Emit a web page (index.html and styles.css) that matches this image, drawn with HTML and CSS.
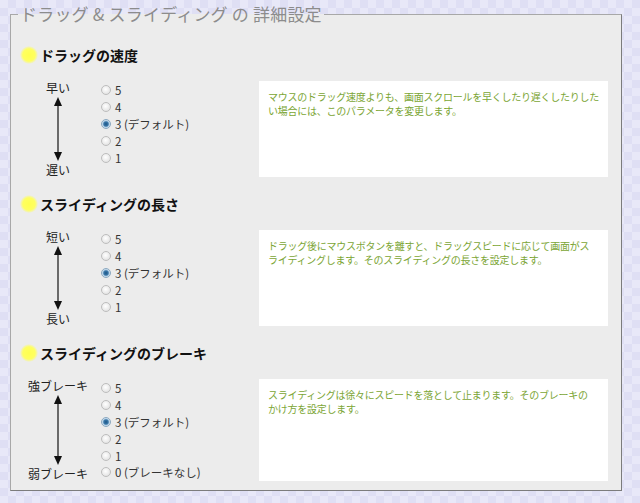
FILE: index.html
```html
<!DOCTYPE html>
<html lang="ja">
<head>
<meta charset="utf-8">
<title>ドラッグ & スライディング の 詳細設定</title>
<link rel="stylesheet" href="styles.css">
</head>
<body>
<fieldset class="panel">
  <legend class="panel-title">ドラッグ &amp; スライディング の 詳細設定</legend>

  <section class="group">
    <h2 class="group-title"><span class="dot"></span>ドラッグの速度</h2>
    <div class="group-body">
      <div class="scale">
        <span class="scale-label">早い</span>
        <span class="arrow"><span class="head-up"></span><span class="shaft"></span><span class="head-down"></span></span>
        <span class="scale-label">遅い</span>
      </div>
      <ul class="options">
        <li><label><input type="radio" name="speed">5</label></li>
        <li><label><input type="radio" name="speed">4</label></li>
        <li><label><input type="radio" name="speed" checked>3 (デフォルト)</label></li>
        <li><label><input type="radio" name="speed">2</label></li>
        <li><label><input type="radio" name="speed">1</label></li>
      </ul>
      <p class="desc">マウスのドラッグ速度よりも、画面スクロールを早くしたり遅くしたりした<br>い場合には、このパラメータを変更します。</p>
    </div>
  </section>

  <section class="group">
    <h2 class="group-title"><span class="dot"></span>スライディングの長さ</h2>
    <div class="group-body">
      <div class="scale">
        <span class="scale-label">短い</span>
        <span class="arrow"><span class="head-up"></span><span class="shaft"></span><span class="head-down"></span></span>
        <span class="scale-label">長い</span>
      </div>
      <ul class="options">
        <li><label><input type="radio" name="length">5</label></li>
        <li><label><input type="radio" name="length">4</label></li>
        <li><label><input type="radio" name="length" checked>3 (デフォルト)</label></li>
        <li><label><input type="radio" name="length">2</label></li>
        <li><label><input type="radio" name="length">1</label></li>
      </ul>
      <p class="desc">ドラッグ後にマウスボタンを離すと、ドラッグスピードに応じて画面がス<br>ライディングします。そのスライディングの長さを設定します。</p>
    </div>
  </section>

  <section class="group">
    <h2 class="group-title"><span class="dot"></span>スライディングのブレーキ</h2>
    <div class="group-body">
      <div class="scale">
        <span class="scale-label">強ブレーキ</span>
        <span class="arrow"><span class="head-up"></span><span class="shaft"></span><span class="head-down"></span></span>
        <span class="scale-label">弱ブレーキ</span>
      </div>
      <ul class="options">
        <li><label><input type="radio" name="brake">5</label></li>
        <li><label><input type="radio" name="brake">4</label></li>
        <li><label><input type="radio" name="brake" checked>3 (デフォルト)</label></li>
        <li><label><input type="radio" name="brake">2</label></li>
        <li><label><input type="radio" name="brake">1</label></li>
        <li><label><input type="radio" name="brake">0 (ブレーキなし)</label></li>
      </ul>
      <p class="desc">スライディングは徐々にスピードを落として止まります。そのブレーキの<br>かけ方を設定します。</p>
    </div>
  </section>
</fieldset>
</body>
</html>
```

FILE: styles.css
```css
html, body {
  margin: 0;
  padding: 0;
}
body {
  width: 640px;
  height: 503px;
  overflow: hidden;
  font-family: "Noto Sans CJK JP", "Noto Sans", sans-serif;
  background-color: #e8e8f8;
  background-image: conic-gradient(#dfdff4 25%, transparent 0 50%, #dfdff4 0 75%, transparent 0);
  background-size: 16px 16px;
}
.panel {
  margin: 3px 18px 0 10px;
  padding: 20px 0 9px 0;
  background: #ececec;
  border: 1px solid #a8a8a8;
  border-right-color: #7c7c7c;
  border-bottom-color: #7c7c7c;
  min-width: 0;
}
.panel-title {
  margin-left: 7px;
  padding: 0 2px;
  font-size: 17px;
  line-height: 22px;
  letter-spacing: 0.2px;
  color: #8c8c8c;
  font-weight: normal;
}
.group + .group {
  margin-top: 17px;
}
.group-title {
  display: flex;
  align-items: center;
  height: 20px;
  margin: 0 0 16px 9px;
  font-size: 14px;
  font-weight: bold;
  color: #111;
}
.dot {
  width: 18px;
  height: 18px;
  margin-right: 2px;
  border-radius: 50%;
  background: radial-gradient(circle, #ffff50 0, #ffff60 48%, rgba(255, 255, 110, 0) 72%);
}
.group-body {
  display: flex;
  align-items: stretch;
}
.scale {
  display: flex;
  flex-direction: column;
  align-items: center;
  width: 62px;
  min-height: 96px;
  margin-left: 16px;
}
.scale-label {
  font-size: 12px;
  line-height: 14px;
  color: #222;
  white-space: nowrap;
}
.arrow {
  flex: 1;
  display: flex;
  flex-direction: column;
  align-items: center;
  margin: 2px 0;
}
.head-up {
  width: 0;
  height: 0;
  border-left: 4px solid transparent;
  border-right: 4px solid transparent;
  border-bottom: 9px solid #111;
}
.head-down {
  width: 0;
  height: 0;
  border-left: 4px solid transparent;
  border-right: 4px solid transparent;
  border-top: 9px solid #111;
}
.shaft {
  flex: 1;
  width: 2px;
  background: #6a6a6a;
}
.options {
  list-style: none;
  margin: 0 0 0 12px;
  padding: 1px 0 0 0;
}
.options li {
  height: 16.8px;
  display: flex;
  align-items: center;
}
.options label {
  display: flex;
  align-items: center;
  font-size: 11.5px;
  line-height: 14px;
  color: #333;
  white-space: nowrap;
}
.options input {
  appearance: none;
  -webkit-appearance: none;
  width: 10px;
  height: 10px;
  margin: 0 4px 0 0;
  border: 1px solid #bdbdbd;
  border-radius: 50%;
  background: radial-gradient(circle at 45% 40%, #ffffff 0, #e2e2e2 80%);
}
.options input:checked {
  border-color: #8aa8c0;
  background: radial-gradient(circle, #1d5585 0, #3a78aa 2.2px, #bcd4e8 3.4px, #eef3f8 5px);
}
.desc {
  width: 349px;
  margin: 0 13px 0 auto;
  padding: 9px 0 0 9px;
  box-sizing: border-box;
  background: #ffffff;
  font-size: 10px;
  line-height: 14px;
  letter-spacing: -0.25px;
  color: #7ba534;
  white-space: nowrap;
}
```
